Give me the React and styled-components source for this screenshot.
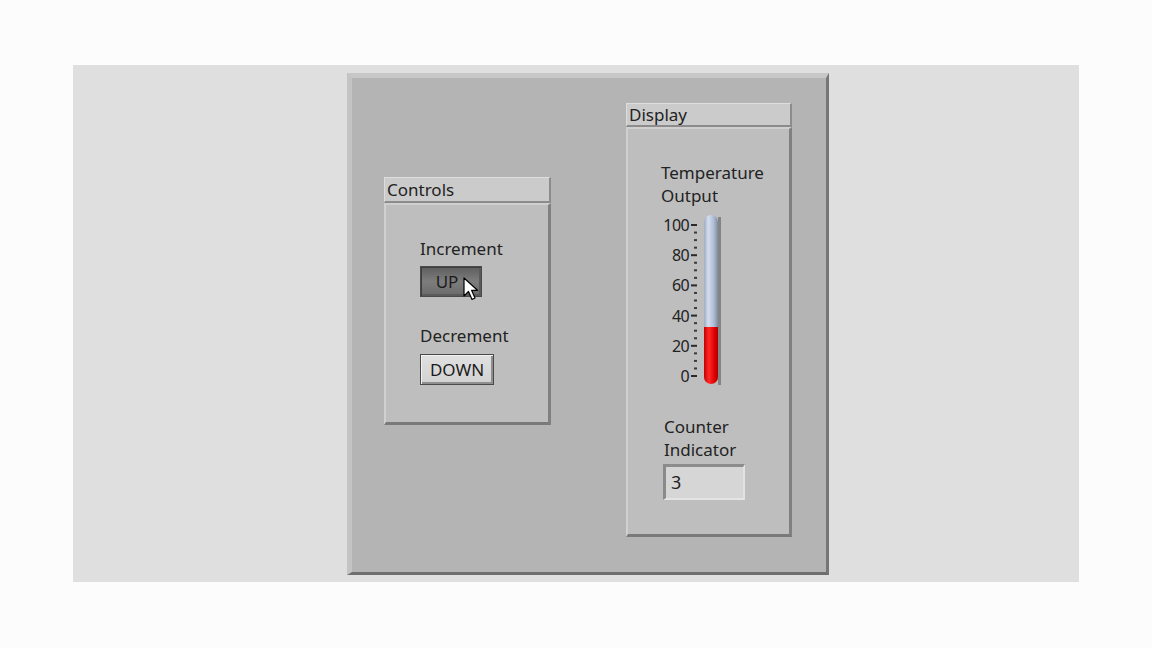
import React from "react";
import styled, { createGlobalStyle } from "styled-components";

const Global = createGlobalStyle`
  html, body { margin: 0; padding: 0; background: #fcfcfc; }
  body { font-family: "Noto Sans", "Open Sans", sans-serif; color: #222; }
`;

const Page = styled.div`
  width: 1152px;
  height: 648px;
  box-sizing: border-box;
  padding: 65px 73px 0 73px;
`;

const Stage = styled.div`
  width: 1006px;
  height: 517px;
  background: #dfdfdf;
  box-sizing: border-box;
  padding: 8px 0 0 274px;
`;

const FrontPanel = styled.div`
  width: 482px;
  height: 502px;
  box-sizing: border-box;
  background: #b4b4b4;
  border-style: solid;
  border-width: 5px 3px 3px 5px;
  border-color: #c7c7c7 #767676 #6e6e6e #c4c4c4;
  display: flex;
  align-items: flex-start;
`;

const Group = styled.div`
  display: flex;
  flex-direction: column;
  width: ${(p) => p.$w}px;
  margin-top: ${(p) => p.$top}px;
  margin-left: ${(p) => p.$left}px;
`;

const GroupLabel = styled.div`
  height: ${(p) => p.$h}px;
  box-sizing: border-box;
  background: #cbcbcb;
  border-style: solid;
  border-width: 1px 2px 2px 1px;
  border-color: #dedede #8c8c8c #8c8c8c #dcdcdc;
  font-size: 17px;
  line-height: ${(p) => p.$h - 3}px;
  padding-left: 2px;
  color: #222;
`;

const GroupBody = styled.div`
  height: ${(p) => p.$h}px;
  box-sizing: border-box;
  background: #bebebe;
  border-style: solid;
  border-width: 2px 3px 3px 2px;
  border-color: #cfcfcf #808080 #7a7a7a #d0d0d0;
  padding: ${(p) => p.$pt}px 0 0 ${(p) => p.$pl}px;
  display: flex;
  flex-direction: column;
  align-items: flex-start;
`;

const Caption = styled.div`
  font-size: 17px;
  line-height: 23px;
  color: #222;
  margin-top: ${(p) => p.$mt || 0}px;
  margin-left: ${(p) => p.$ml || 0}px;
`;

const Button = styled.div`
  position: relative;
  width: ${(p) => p.$w}px;
  height: 31px;
  box-sizing: border-box;
  margin-top: ${(p) => p.$mt}px;
  border: 1px solid #4a4a4a;
  box-shadow: inset 1px 1px 0 ${(p) => (p.$pressed ? "#3e3e3e" : "#f2f2f2")},
    inset -2px -2px 0 ${(p) => (p.$pressed ? "#5a5a5a" : "#8e8e8e")};
  background: ${(p) =>
    p.$pressed
      ? "linear-gradient(180deg, #5e5e5e 0%, #7d7d7d 50%, #6a6a6a 100%)"
      : "linear-gradient(180deg, #e0e0e0 0%, #d2d2d2 100%)"};
  font-size: 17px;
  line-height: 29px;
  text-align: center;
  color: #1c1c1c;
  padding-right: ${(p) => p.$pr || 0}px;
`;

const Cursor = styled.svg`
  position: absolute;
  left: 42px;
  top: 10px;
`;

const Thermo = styled.svg`
  display: block;
`;

const Numeric = styled.div`
  width: 82px;
  height: 36px;
  box-sizing: border-box;
  margin-top: 3px;
  margin-left: 2px;
  background: #d6d6d6;
  border-style: solid;
  border-width: 3px 2px 2px 3px;
  border-color: #8c8c8c #e2e2e2 #e4e4e4 #8a8a8a;
  font-size: 18px;
  line-height: 30px;
  padding-left: 5px;
  color: #222;
`;

function Thermometer({ value }) {
  const zeroY = 169;
  const scale = 1.51;
  const labels = [0, 20, 40, 60, 80, 100];
  const minors = [];
  for (let v = 0; v <= 100; v += 5) minors.push(v);
  const topFill = zeroY - value * scale;
  return (
    <Thermo width="70" height="184" viewBox="0 0 70 184">
      <defs>
        <linearGradient id="tube" x1="0" x2="1">
          <stop offset="0" stopColor="#9eabc2" />
          <stop offset="0.3" stopColor="#d4deee" />
          <stop offset="0.7" stopColor="#aebbd2" />
          <stop offset="1" stopColor="#7d8aa2" />
        </linearGradient>
        <linearGradient id="red" x1="0" x2="1">
          <stop offset="0" stopColor="#c40000" />
          <stop offset="0.35" stopColor="#ff2a2a" />
          <stop offset="0.75" stopColor="#e00000" />
          <stop offset="1" stopColor="#a80000" />
        </linearGradient>
      </defs>
      {labels.map((v) => (
        <text
          key={v}
          x="28"
          y={zeroY - v * scale + 6}
          textAnchor="end"
          fontFamily="Noto Sans, sans-serif"
          fontSize="16"
          letterSpacing="-0.6"
          fill="#222"
        >
          {v}
        </text>
      ))}
      {minors.map((v) =>
        v % 20 === 0 ? (
          <rect key={v} x="30" y={zeroY - v * scale - 1} width="6" height="2" fill="#2a2a2a" />
        ) : (
          <rect key={v} x="33" y={zeroY - v * scale - 1} width="3" height="2" fill="#3a3a3a" />
        )
      )}
      <rect x="57" y="10" width="3" height="168" fill="#5e5e5e" opacity="0.6" />
      <path d="M43 15 a7 7 0 0 1 14 0 V170 a7 7 0 0 1 -14 0 Z" fill="url(#tube)" />
      <path d={`M43 ${topFill} H57 V170 a7 7 0 0 1 -14 0 Z`} fill="url(#red)" />
    </Thermo>
  );
}

export default function App() {
  return (
    <Page>
      <Global />
      <Stage>
        <FrontPanel>
          <Group $w={167} $top={99} $left={32}>
            <GroupLabel $h={26}>Controls</GroupLabel>
            <GroupBody $h={222} $pt={32} $pl={34}>
              <Caption>Increment</Caption>
              <Button $w={62} $mt={6} $pressed $pr={8}>
                UP
                <Cursor width="20" height="26" viewBox="0 0 20 26">
                  <path
                    d="M1 1 L1 19 L5.5 14.5 L9 22.5 L12 21 L8.6 13.3 L14.5 13.3 Z"
                    fill="#fff"
                    stroke="#000"
                    strokeWidth="1.2"
                    strokeLinejoin="round"
                  />
                </Cursor>
              </Button>
              <Caption $mt={27}>Decrement</Caption>
              <Button $w={74} $mt={7}>DOWN</Button>
            </GroupBody>
          </Group>
          <Group $w={166} $top={25} $left={75}>
            <GroupLabel $h={24}>Display</GroupLabel>
            <GroupBody $h={410} $pt={32} $pl={33}>
              <Caption>
                Temperature
                <br />
                Output
              </Caption>
              <Thermometer value={32.5} />
              <Caption $mt={24} $ml={3}>
                Counter
                <br />
                Indicator
              </Caption>
              <Numeric>3</Numeric>
            </GroupBody>
          </Group>
        </FrontPanel>
      </Stage>
    </Page>
  );
}
